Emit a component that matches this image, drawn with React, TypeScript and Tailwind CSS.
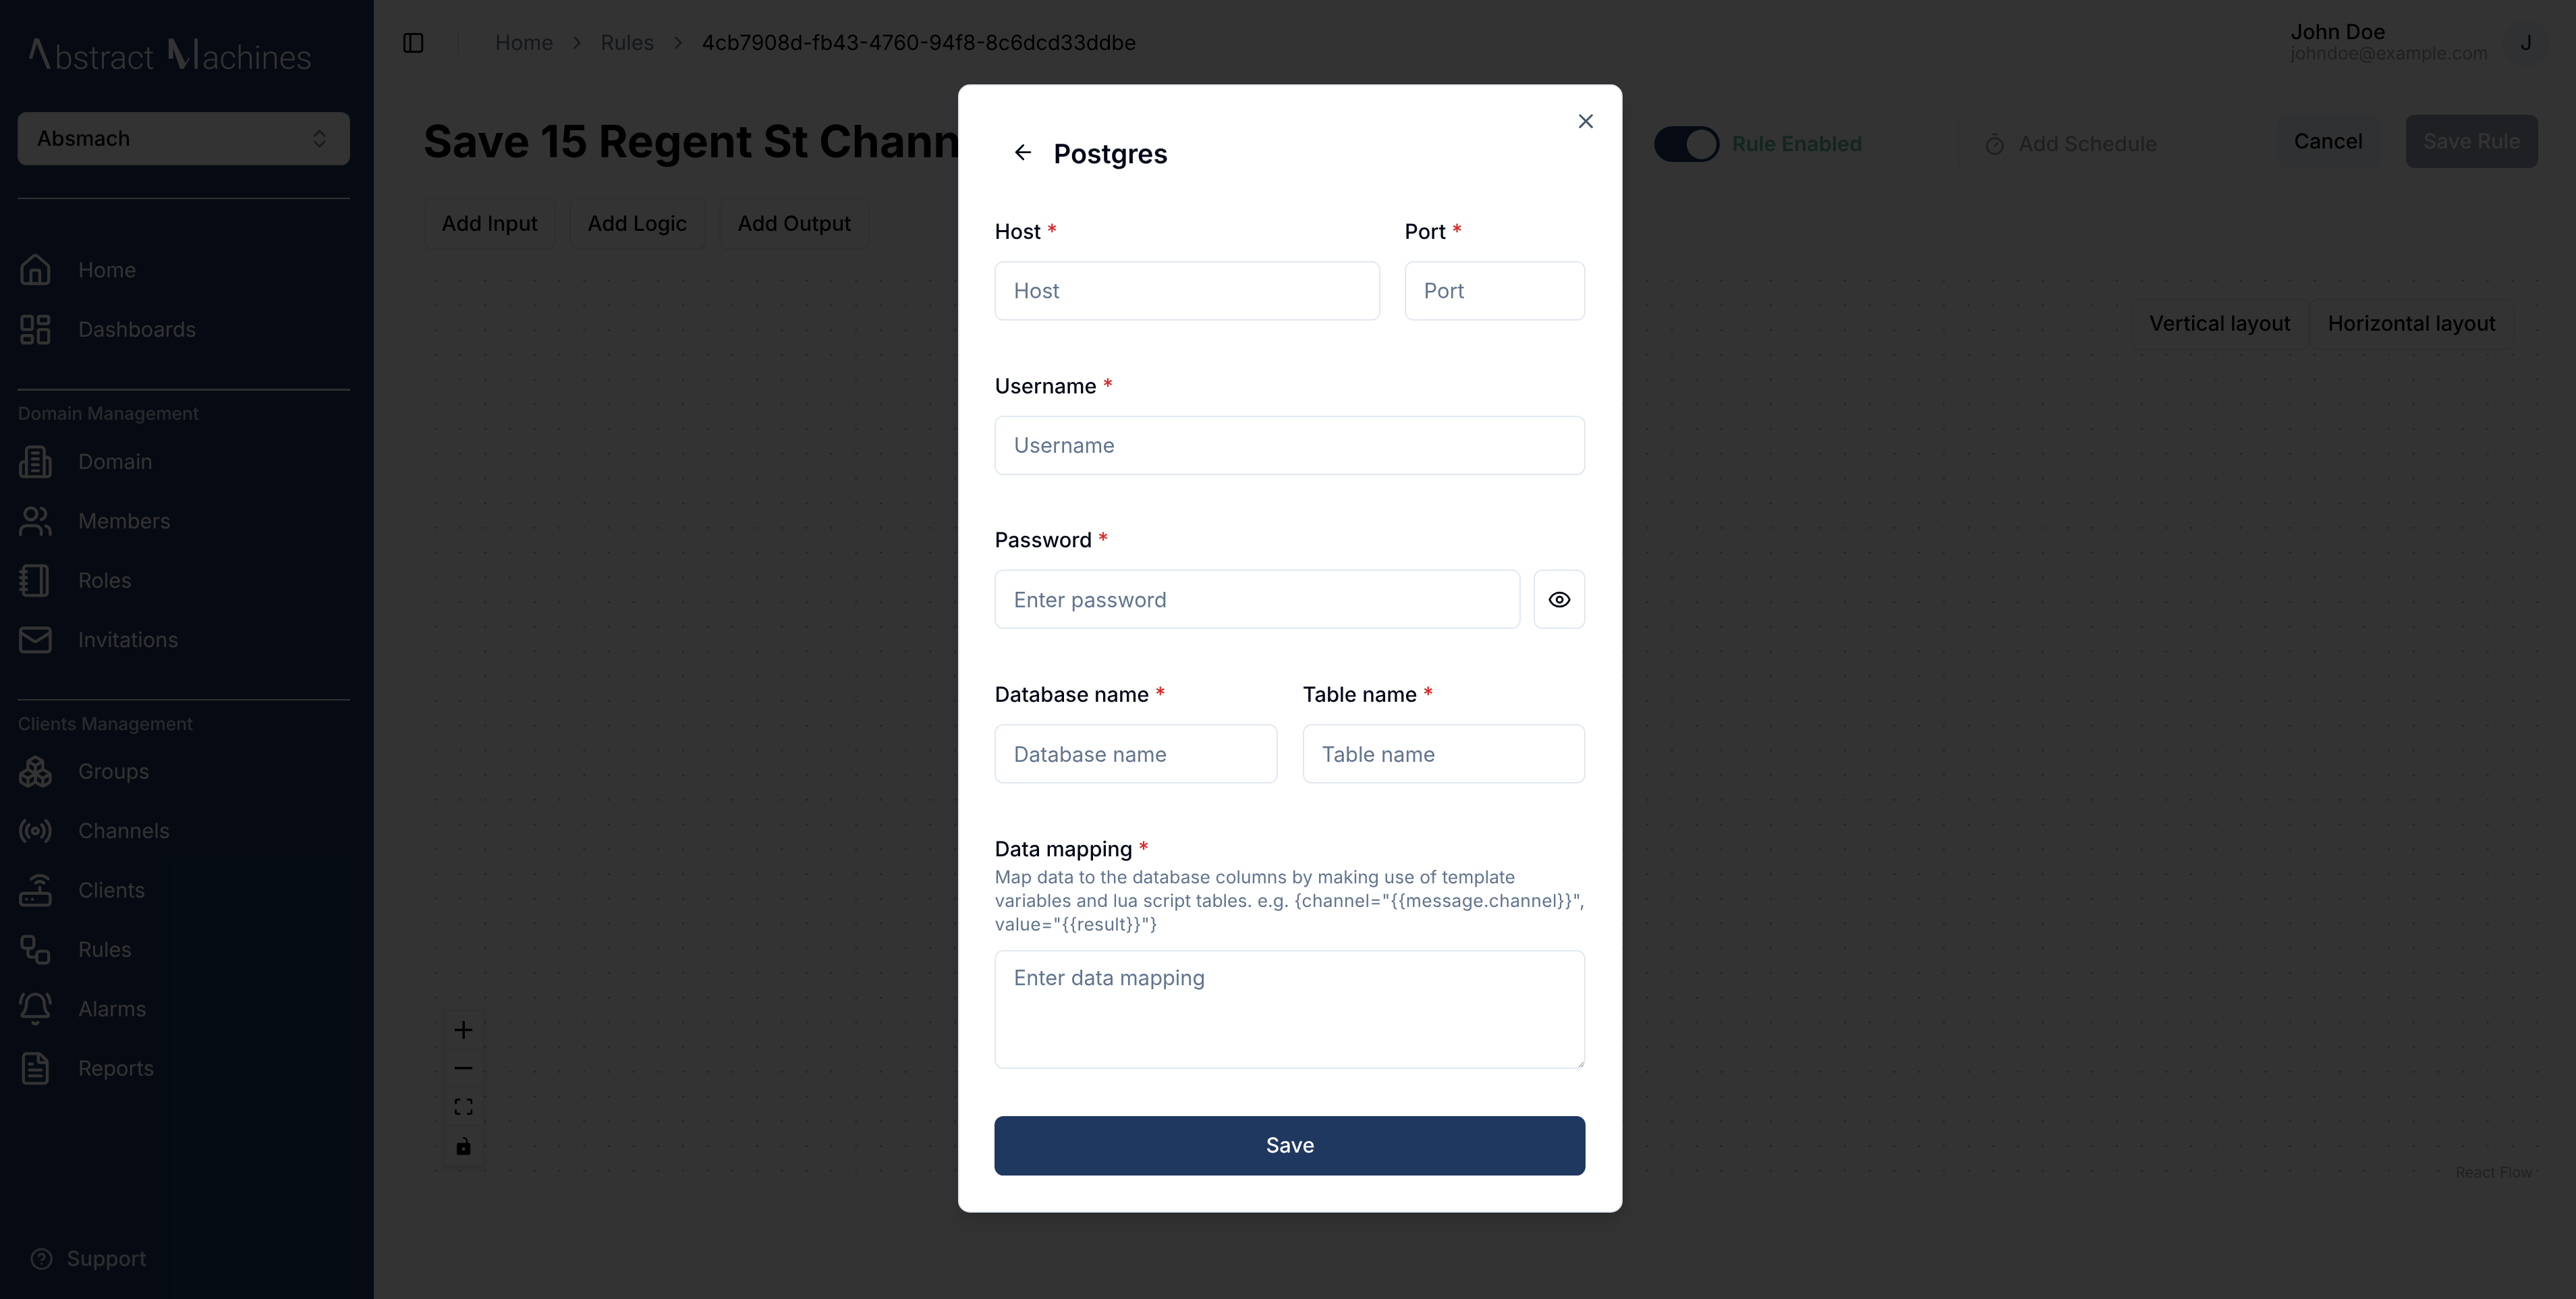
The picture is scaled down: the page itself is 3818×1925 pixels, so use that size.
import React from "react";
import {
  House, LayoutDashboard, Users, Notebook, Mail, Boxes, Radio, Router, Workflow, BellRing, FileText,
  CircleHelp, PanelLeft, ChevronRight, ChevronsUpDown, Timer, X, ArrowLeft, Eye,
} from "lucide-react";

function Building(props: { className?: string }) {
  return (
    <svg viewBox="0 0 24 24" fill="none" stroke="currentColor" strokeWidth={2} strokeLinecap="round" strokeLinejoin="round" className={props.className}>
      <path d="M6 22V4a2 2 0 0 1 2-2h8a2 2 0 0 1 2 2v18Z" />
      <path d="M6 12H4a2 2 0 0 0-2 2v6a2 2 0 0 0 2 2h2" />
      <path d="M18 9h2a2 2 0 0 1 2 2v9a2 2 0 0 1-2 2h-2" />
      <path d="M10 6h4" /><path d="M10 10h4" /><path d="M10 14h4" /><path d="M10 18h4" />
    </svg>
  );
}

function NavRow({ icon: Icon, label }: { icon: React.ComponentType<{ className?: string }>; label: string }) {
  return (
    <div className="flex h-10 items-center gap-[16.7px] text-sm text-white">
      <Icon className="size-6 shrink-0" />
      <span className="pt-[0.5px]">{label}</span>
    </div>
  );
}

function SectionLabel({ children }: { children: string }) {
  return <div className="mt-2 h-4 text-xs leading-4 font-medium text-white/75">{children}</div>;
}

function Sep({ className }: { className: string }) {
  return <div className={"h-px w-56 shrink-0 bg-[#e8edf2] " + className} />;
}

function Sidebar() {
  return (
    <aside className="flex h-full w-[251.6px] shrink-0 flex-col bg-[#1e3a5f] px-3">
      <div className="flex h-[75.5px] shrink-0 items-baseline pt-[26px] pl-[7.4px] font-[Roboto,sans-serif] text-[21.8px] leading-[22px] font-light text-white">
        <svg viewBox="38 55 100 135" className="h-[20.5px] w-[15.2px] fill-white">
          <polygon points="38,145 52,145 72,78 118,190 135,190 82,55 62,55" />
        </svg>
        <span className="ml-[2.3px]">bstract</span>
        <svg viewBox="657 55 130 135" className="ml-[9.8px] h-[20.5px] w-[19.7px] fill-white">
          <polygon points="657,55 677,55 732,165 745,140 751,143 723,190 708,190 677,98 677,145 657,145" />
          <rect x="772" y="55" width="15" height="135" />
        </svg>
        <span className="ml-[2.9px]">achines</span>
      </div>
      <div className="flex h-9 w-56 shrink-0 items-center justify-between rounded-md border border-slate-200 bg-white px-3 text-sm font-medium text-black">
        <span>Absmach</span>
        <ChevronsUpDown className="size-4 text-black/50" />
      </div>
      <Sep className="mt-[21.5px]" />
      <div className="mt-7">
        <NavRow icon={House} label="Home" />
        <NavRow icon={LayoutDashboard} label="Dashboards" />
      </div>
      <Sep className="mt-5" />
      <SectionLabel>Domain Management</SectionLabel>
      <div className="mt-1">
        <NavRow icon={Building} label="Domain" />
        <NavRow icon={Users} label="Members" />
        <NavRow icon={Notebook} label="Roles" />
        <NavRow icon={Mail} label="Invitations" />
      </div>
      <Sep className="mt-5" />
      <SectionLabel>Clients Management</SectionLabel>
      <div className="mt-1">
        <NavRow icon={Boxes} label="Groups" />
        <NavRow icon={Radio} label="Channels" />
        <NavRow icon={Router} label="Clients" />
        <NavRow icon={Workflow} label="Rules" />
        <NavRow icon={BellRing} label="Alarms" />
        <NavRow icon={FileText} label="Reports" />
      </div>
      <div className="mt-auto mb-[17px] ml-[8px] flex h-5 items-center gap-[9px] text-sm font-medium text-white/85">
        <CircleHelp className="size-4" />
        <span>Support</span>
      </div>
    </aside>
  );
}

function TopBar() {
  return (
    <header className="flex h-[58px] shrink-0 items-center pr-[17.5px] pl-[19px]">
      <PanelLeft className="size-4 text-black" />
      <div className="ml-[21.6px] h-4 w-px bg-slate-200" />
      <nav className="ml-[24.5px] flex items-center gap-[8.9px] text-sm text-slate-500">
        <span>Home</span>
        <ChevronRight className="size-3.5" />
        <span>Rules</span>
        <ChevronRight className="size-3.5" />
        <span className="text-black">4cb7908d-fb43-4760-94f8-8c6dcd33ddbe</span>
      </nav>
      <div className="ml-auto flex items-center gap-[9.5px]">
        <div className="flex flex-col">
          <span className="text-sm/[14px] font-medium text-black">John Doe</span>
          <span className="text-xs/[14px] text-[#a0a0a0]">johndoe@example.com</span>
        </div>
        <div className="flex size-8 items-center justify-center rounded-full bg-slate-100 text-sm text-[#0f172a]">J</div>
      </div>
    </header>
  );
}

function TitleRow() {
  return (
    <div className="mt-[19.3px] flex h-9 shrink-0 items-center pr-[25.5px] pl-[33.9px]">
      <h1 className="-ml-[0.4px] w-[360.4px] shrink-0 text-3xl font-bold whitespace-nowrap text-black">Save 15 Regent St Chann</h1>
      <div className="mt-[3.6px] ml-[469px] flex h-6 w-11 items-center justify-end rounded-full bg-[#1e3a5f] pr-0.5">
        <div className="size-5 rounded-full bg-white" />
      </div>
      <span className="mt-[3.6px] ml-[8.6px] w-[87.5px] text-sm font-semibold whitespace-nowrap text-[#5fb8a0]">Rule Enabled</span>
      <div className="mt-[3.6px] ml-[64.5px] flex h-[38.6px] w-[149px] items-center gap-[8px] rounded-md border border-[#f2f2f2] pl-[16px] text-sm font-medium text-[#a0a0a0]">
        <Timer className="size-4" />
        <span>Add Schedule</span>
      </div>
      <div className="ml-[66px] flex h-9 w-[69.5px] items-center justify-center rounded-md bg-slate-100 text-sm font-medium text-black">Cancel</div>
      <div className="ml-[17.4px] flex h-9 w-[89px] items-center justify-center rounded-md bg-[#9ba0ad] text-sm font-medium text-white">Save Rule</div>
    </div>
  );
}

function OutlineBtn({ children, className }: { children: string; className: string }) {
  return (
    <div className={"flex items-center justify-center rounded-md border border-slate-200 text-sm font-medium whitespace-nowrap text-black " + className}>
      {children}
    </div>
  );
}

function Canvas() {
  return (
    <div className="relative mt-[15.4px] mr-[25.5px] ml-[33.9px] h-[616px] shrink-0 bg-[#fcfcfc] bg-[radial-gradient(circle,#9a9a9a_0.45px,transparent_0.55px)] bg-[size:16.66px_16.66px] bg-[position:-0.13px_-2.93px]">
      <div className="absolute top-[17px] right-4 flex">
        <OutlineBtn className="h-[35px] w-[120.5px] bg-white">Vertical layout</OutlineBtn>
        <OutlineBtn className="h-[35px] w-[138px] bg-white">Horizontal layout</OutlineBtn>
      </div>
      <div className="absolute bottom-[13.7px] left-[13.6px] flex w-[26.6px] flex-col border border-[#eeeeee] bg-white shadow-sm">
        <div className="flex h-[25.8px] items-center justify-center border-b border-[#eeeeee]">
          <svg viewBox="0 0 32 32" className="size-3 fill-black"><path d="M32 18.133H18.133V32h-4.266V18.133H0v-4.266h13.867V0h4.266v13.867H32z" /></svg>
        </div>
        <div className="flex h-[25.8px] items-center justify-center border-b border-[#eeeeee]">
          <svg viewBox="0 0 32 5" className="w-3 fill-black"><path d="M0 0h32v4.2H0z" /></svg>
        </div>
        <div className="flex h-[25.8px] items-center justify-center border-b border-[#eeeeee]">
          <svg viewBox="0 0 32 30" className="w-3 fill-black"><path d="M3.692 4.63c0-.53.4-.938.939-.938h5.215V0H4.708C2.13 0 0 2.054 0 4.63v5.216h3.692V4.631zM27.354 0h-5.2v3.692h5.17c.53 0 .984.4.984.939v5.215H32V4.631A4.624 4.624 0 0027.354 0zm.954 24.83c0 .532-.4.94-.939.94h-5.215v3.768h5.215c2.577 0 4.631-2.13 4.631-4.707v-5.139h-3.692v5.139zm-23.677.94c-.531 0-.939-.4-.939-.94v-5.138H0v5.139c0 2.577 2.13 4.707 4.708 4.707h5.138V25.77H4.631z" /></svg>
        </div>
        <div className="flex h-[26.4px] items-center justify-center">
          <svg viewBox="0 0 25 32" className="h-3 w-[9.4px] fill-black"><path d="M21.333 10.667H19.81V7.619C19.81 3.429 16.38 0 12.19 0c-4.114 1.828-1.37 2.133.305 2.438 1.676.305 4.42 2.59 4.42 5.181v3.048H3.047A3.056 3.056 0 000 13.714v15.238A3.056 3.056 0 003.048 32h18.285a3.056 3.056 0 003.048-3.048V13.714a3.056 3.056 0 00-3.048-3.047zM12.19 24.533a3.056 3.056 0 01-3.047-3.047 3.056 3.056 0 013.047-3.048 3.056 3.056 0 013.048 3.048 3.056 3.056 0 01-3.048 3.047z" /></svg>
        </div>
      </div>
      <span className="absolute right-[1.6px] bottom-[2px] bg-[#fcfcfc] px-0.5 text-[10px] leading-[15px] text-[#a6a6a6]">React Flow</span>
    </div>
  );
}

function Label({ children }: { children: string }) {
  return (
    <label className="block h-5 pt-[0.5px] text-sm leading-5 font-medium text-[#020817]">
      {children} <span className="text-[#dc2626]">*</span>
    </label>
  );
}

const inputCls =
  "block h-10 w-full rounded-md border border-slate-200 bg-white px-3 text-sm text-[#020817] placeholder:text-slate-500 outline-none";

function Field({ label, placeholder, className }: { label: string; placeholder: string; className?: string }) {
  return (
    <div className={className}>
      <Label>{label}</Label>
      <input placeholder={placeholder} className={"mt-[10px] " + inputCls} />
    </div>
  );
}

function Modal() {
  return (
    <div className="absolute top-[56.8px] left-[645.3px] flex h-[760px] w-[448px] flex-col rounded-lg border border-slate-200 bg-white p-6 shadow-lg">
      <X className="absolute top-4 right-4 size-4 text-[#475569]" />
      <div className="flex h-[64.1px] shrink-0 items-start">
        <div className="mt-[2.8px] ml-px flex size-9 items-center justify-center">
          <ArrowLeft className="size-4 text-[#020817]" />
        </div>
        <h2 className="mt-[8.2px] ml-[2.7px] text-lg leading-7 font-semibold text-[#020817]">Postgres</h2>
      </div>
      <div className="flex flex-col gap-[34px]">
        <div className="flex gap-[16.6px]">
          <Field label="Host" placeholder="Host" className="min-w-0 flex-1" />
          <Field label="Port" placeholder="Port" className="w-[122px] shrink-0" />
        </div>
        <Field label="Username" placeholder="Username" />
        <div>
          <Label>Password</Label>
          <div className="mt-[10px] flex gap-[9px]">
            <input placeholder="Enter password" className={inputCls + " min-w-0 flex-1"} />
            <div className="flex h-10 w-[35px] shrink-0 items-center justify-center rounded-md border border-slate-200">
              <Eye className="size-4 text-[#020817]" />
            </div>
          </div>
        </div>
        <div className="flex gap-[16.6px]">
          <Field label="Database name" placeholder="Database name" className="min-w-0 flex-1" />
          <Field label="Table name" placeholder="Table name" className="min-w-0 flex-1" />
        </div>
        <div>
          <Label>Data mapping</Label>
          <p className="mt-[1.4px] text-xs leading-4 whitespace-nowrap text-slate-500">
            <span className="block tracking-[0.03px]">Map data to the database columns by making use of template</span>
            <span className="block tracking-[0.03px]">
              variables and lua script tables. e.g. <span className="tracking-[0.15px]">{'{channel="{{message.channel}}",'}</span>
            </span>
            <span className="block tracking-[0.15px]">{'value="{{result}}"}'}</span>
          </p>
          <textarea
            placeholder="Enter data mapping"
            className="mt-[8.6px] block h-20 w-full resize-y rounded-md border border-slate-200 bg-white px-3 py-2 text-sm text-[#020817] outline-none placeholder:text-slate-500"
          />
        </div>
      </div>
      <div className="mt-8 flex h-10 shrink-0 items-center justify-center rounded-md bg-[#1f3860] text-sm font-medium text-white">Save</div>
    </div>
  );
}

export default function App() {
  return (
    <div className="relative flex h-[875px] w-[1735.46px] overflow-hidden bg-white font-[Inter,sans-serif] [text-rendering:geometricPrecision] [will-change:transform] [zoom:2.2]">
      <Sidebar />
      <main className="flex min-w-0 flex-1 flex-col">
        <TopBar />
        <TitleRow />
        <div className="mt-[19.7px] flex h-[35.4px] shrink-0 gap-[9px] pl-[33.9px]">
          <OutlineBtn className="w-[89px]">Add Input</OutlineBtn>
          <OutlineBtn className="w-[92px]">Add Logic</OutlineBtn>
          <OutlineBtn className="w-[101.4px]">Add Output</OutlineBtn>
        </div>
        <Canvas />
      </main>
      <div className="absolute inset-0 bg-black/80" />
      <Modal />
    </div>
  );
}
